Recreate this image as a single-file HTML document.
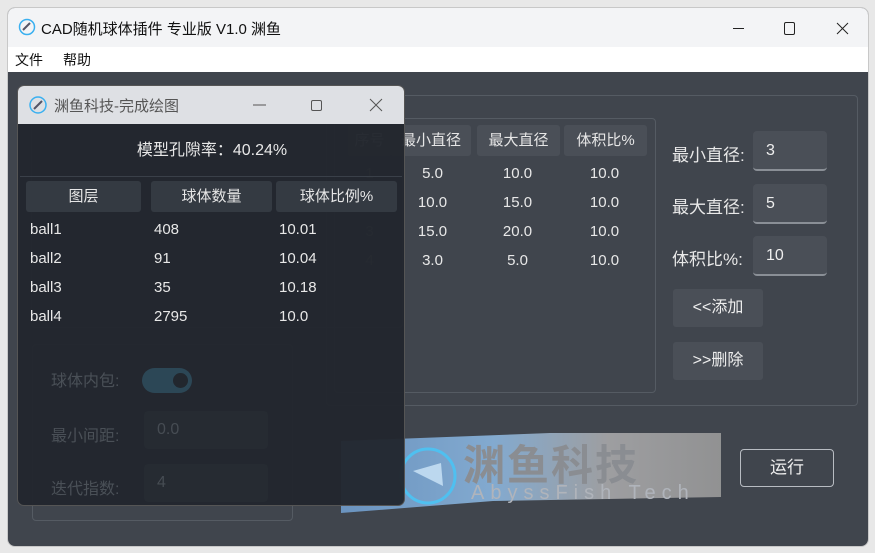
<!DOCTYPE html>
<html><head><meta charset="utf-8"><style>
*{box-sizing:border-box;margin:0;padding:0}
body{width:875px;height:553px;background:#e8e8e8;font-family:"Liberation Sans","Noto Sans CJK SC",sans-serif;position:relative;overflow:hidden}
.a{position:absolute}
.win{left:7px;top:7px;width:862px;height:540px;border-radius:8px;overflow:hidden;background:#40454d;border:1px solid #c8c8c8}
.tb{left:0;top:0;width:862px;height:39px;background:#f3f4f6;color:#111;font-size:15px}
.mb{left:0;top:39px;width:862px;height:25px;background:#fff;font-size:14px;color:#111}
.box{border:1px solid #555b63;border-radius:4px}
.hc{background:#4a4f57;border-radius:3px;color:#e6e6e6;font-size:15px;text-align:center;line-height:31px}
.t{color:#e8e8e8;font-size:15px}
.in{background:#4a4f57;border-radius:4px;border-bottom:2px solid #8a8f96;color:#eee;font-size:16px;padding-left:13px;line-height:40px}
.btn{background:#4a4f57;border-radius:3px;color:#eee;font-size:16px;text-align:center;line-height:38px}
.f{color:#5a5f66;font-size:16px}
</style></head><body>
<div class="a win">
 <div class="a tb">
  <svg class="a" style="left:10px;top:10px" width="18" height="18"><circle cx="9" cy="9" r="7.5" fill="none" stroke="#3ab0f0" stroke-width="1.5"/><path d="M5 12 L12 5" stroke="#556" stroke-width="2"/></svg>
  <span class="a" style="left:33px;top:10px">CAD随机球体插件 专业版 V1.0 渊鱼</span>
  <svg class="a" style="left:700px;top:10px" width="150" height="20"><path d="M25 10.5H36" stroke="#222" stroke-width="1"/><rect x="76.5" y="4.5" width="10" height="12" rx="1.5" fill="none" stroke="#222"/><path d="M129 5L140 16M140 5L129 16" stroke="#222" stroke-width="1"/></svg>
 </div>
 <div class="a mb"><span class="a" style="left:7px;top:3px">文件</span><span class="a" style="left:55px;top:3px">帮助</span></div>
 <!-- underlying left -->
 <div class="a box" style="left:23px;top:90px;width:372px;height:230px"></div>
 <div class="a box" style="left:24px;top:336px;width:261px;height:177px"></div>
 <!-- right group -->
 <div class="a box" style="left:318px;top:87px;width:532px;height:311px"></div>
 <span class="a" style="left:332px;top:79px;color:#ccc;font-size:16px">粒径比例</span>
 <div class="a box" style="left:326px;top:110px;width:322px;height:275px"></div>
 <div class="a hc" style="left:340px;top:117px;width:43px;color:#aaa">序号</div>
 <div class="a hc" style="left:383px;top:117px;width:80px">最小直径</div>
 <div class="a hc" style="left:469px;top:117px;width:83px">最大直径</div>
 <div class="a hc" style="left:556px;top:117px;width:83px">体积比%</div>
 <div class="a t" style="left:340px;top:151px;width:300px;line-height:29px">
  <div style="display:flex"><span style="width:43px;text-align:center;color:#777">1</span><span style="width:83px;text-align:center">5.0</span><span style="width:87px;text-align:center">10.0</span><span style="width:87px;text-align:center">10.0</span></div>
  <div style="display:flex"><span style="width:43px;text-align:center;color:#777">2</span><span style="width:83px;text-align:center">10.0</span><span style="width:87px;text-align:center">15.0</span><span style="width:87px;text-align:center">10.0</span></div>
  <div style="display:flex"><span style="width:43px;text-align:center;color:#777">3</span><span style="width:83px;text-align:center">15.0</span><span style="width:87px;text-align:center">20.0</span><span style="width:87px;text-align:center">10.0</span></div>
  <div style="display:flex"><span style="width:43px;text-align:center;color:#777">4</span><span style="width:83px;text-align:center">3.0</span><span style="width:87px;text-align:center">5.0</span><span style="width:87px;text-align:center">10.0</span></div>
 </div>
 <span class="a t" style="left:664px;top:133px;font-size:17px">最小直径:</span><div class="a in" style="left:745px;top:123px;width:74px;height:40px">3</div>
 <span class="a t" style="left:664px;top:185px;font-size:17px">最大直径:</span><div class="a in" style="left:745px;top:176px;width:74px;height:40px">5</div>
 <span class="a t" style="left:664px;top:237px;font-size:17px">体积比%:</span><div class="a in" style="left:745px;top:228px;width:74px;height:40px">10</div>
 <div class="a btn" style="left:665px;top:281px;width:90px;height:38px">&lt;&lt;添加</div>
 <div class="a btn" style="left:665px;top:334px;width:90px;height:38px">&gt;&gt;删除</div>
 <div class="a" style="left:732px;top:441px;width:94px;height:38px;border:1.5px solid #b8bcc2;border-radius:4px;color:#eee;font-size:17px;text-align:center;line-height:35px">运行</div>
 <!-- logo -->
 <div class="a" style="left:333px;top:425px;width:380px;height:80px;background:linear-gradient(90deg,#6f9ccc,#8ab5de 40%,#a8a8aa 70%,#9a9a9a);clip-path:polygon(0 10%,55% 0,100% 0,100% 80%,40% 85%,0 100%);opacity:.9"></div>
 <svg class="a" style="left:385px;top:433px" width="70" height="70"><circle cx="35" cy="35" r="27" fill="none" stroke="#4fc0f0" stroke-width="3"/><path d="M20 30 L50 45 L48 22 Z" fill="#bcd8ef"/></svg>
 <span class="a" style="left:455px;top:424px;font-size:42px;font-weight:bold;color:#8a8d92;letter-spacing:2px">渊鱼科技</span>
 <span class="a" style="left:463px;top:474px;font-size:20px;color:#b0b4bb;letter-spacing:6px">AbyssFish Tech</span>
</div>
<!-- dialog -->
<div class="a" style="left:17px;top:85px;width:388px;height:421px;border-radius:7px;overflow:hidden;background:rgba(34,39,46,.96);border:1px solid #555">
 <div class="a" style="left:0;top:0;width:388px;height:38px;background:rgba(230,232,235,.96);color:#333;font-size:15px">
  <svg class="a" style="left:10px;top:9px" width="20" height="20"><circle cx="10" cy="10" r="8" fill="none" stroke="#3ab0f0" stroke-width="1.5"/><path d="M6 14 L14 6" stroke="#556" stroke-width="2"/></svg>
  <span class="a" style="left:36px;top:9px;color:#555">渊鱼科技-完成绘图</span>
  <svg class="a" style="left:230px;top:8px" width="150" height="22"><path d="M5 11H18" stroke="#555"/><rect x="63.5" y="6.5" width="10" height="10" rx="1.5" fill="none" stroke="#555"/><path d="M122 5L134 17M134 5L122 17" stroke="#555"/></svg>
 </div>
 <div class="a t" style="left:0;top:50px;width:388px;text-align:center;font-size:16px">模型孔隙率：40.24%</div>
 <div class="a" style="left:2px;top:90px;width:382px;height:1px;background:#3a4049"></div>
 <div class="a hc" style="left:8px;top:95px;width:115px;background:#343a42">图层</div>
 <div class="a hc" style="left:133px;top:95px;width:121px;background:#343a42">球体数量</div>
 <div class="a hc" style="left:258px;top:95px;width:121px;background:#343a42">球体比例%</div>
 <div class="a t" style="left:12px;top:129px;line-height:29px">ball1<br>ball2<br>ball3<br>ball4</div>
 <div class="a t" style="left:136px;top:129px;line-height:29px">408<br>91<br>35<br>2795</div>
 <div class="a t" style="left:261px;top:129px;line-height:29px">10.01<br>10.04<br>10.18<br>10.0</div>
 <span class="a" style="left:33px;top:281px;color:#4a5057;font-size:16px">球体内包:</span>
 <div class="a" style="left:124px;top:282px;width:50px;height:25px;border-radius:13px;background:#2c4756"></div>
 <div class="a" style="left:155px;top:287px;width:15px;height:15px;border-radius:50%;background:#22272e"></div>
 <span class="a" style="left:33px;top:336px;color:#4a5057;font-size:16px">最小间距:</span>
 <div class="a" style="left:126px;top:325px;width:124px;height:38px;border-radius:4px;background:#262b32;color:#464c53;font-size:16px;padding:10px 13px">0.0</div>
 <span class="a" style="left:33px;top:389px;color:#4a5057;font-size:16px">迭代指数:</span>
 <div class="a" style="left:126px;top:378px;width:124px;height:38px;border-radius:4px;background:#262b32;color:#464c53;font-size:16px;padding:10px 13px">4</div>
</div>
</body></html>
